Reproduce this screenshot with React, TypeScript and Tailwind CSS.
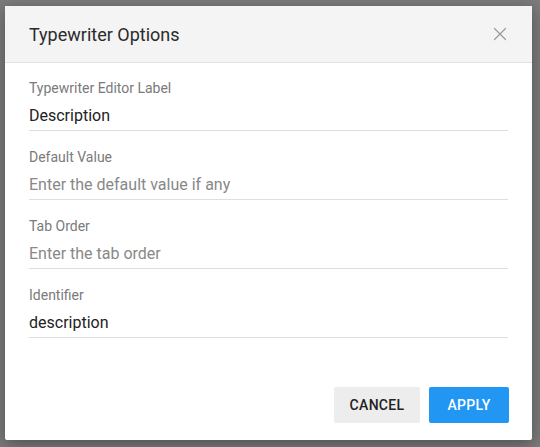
import { X } from "lucide-react";

const fields = [
  { label: "Typewriter Editor Label", value: "Description", placeholder: "" },
  { label: "Default Value", value: "", placeholder: "Enter the default value if any" },
  { label: "Tab Order", value: "", placeholder: "Enter the tab order" },
  { label: "Identifier", value: "description", placeholder: "" },
];

export default function App() {
  return (
    <div className="h-[447px] w-[540px] overflow-hidden bg-[#7b7b7b] pl-[5px] pt-[6px] font-['Roboto',sans-serif]">
      <div className="flex h-[434px] w-[527px] flex-col rounded-[2px] bg-white shadow-[0_4px_16px_rgba(0,0,0,0.35)]">
        <div className="flex h-[57px] shrink-0 items-center justify-between border-b border-[#e2e2e2] bg-[#f4f4f4] pl-[24px] pr-[21px]">
          <h2 className="text-[18px] font-normal text-[#2b2b2b]">Typewriter Options</h2>
          <X size={22} strokeWidth={1.3} className="text-[#9a9a9a]" />
        </div>
        <div className="flex flex-col px-[24px] pt-[15px]">
          {fields.map((f, i) => (
            <div key={f.label} className={i > 0 ? "mt-4" : ""}>
              <div className="h-[20px] text-[14px] leading-[20px] text-[#7a7a7a]">{f.label}</div>
              <div className="mt-[6px] border-b border-[#dedede] pb-[2px]">
                <input
                  readOnly
                  value={f.value}
                  placeholder={f.placeholder}
                  className="block h-[24px] w-full bg-transparent text-[16px] leading-[24px] text-[#222] outline-none placeholder:text-[#888]"
                />
              </div>
            </div>
          ))}
        </div>
        <div className="mt-auto flex justify-end gap-[9px] px-[23px] pb-[17px]">
          <button className="h-[36px] w-[86px] rounded-[2px] bg-[#ededed] text-[14px] font-medium tracking-[0.3px] text-[#222]">
            CANCEL
          </button>
          <button className="h-[36px] w-[80px] rounded-[2px] bg-[#2196f3] text-[14px] font-medium tracking-[0.3px] text-white">
            APPLY
          </button>
        </div>
      </div>
    </div>
  );
}
